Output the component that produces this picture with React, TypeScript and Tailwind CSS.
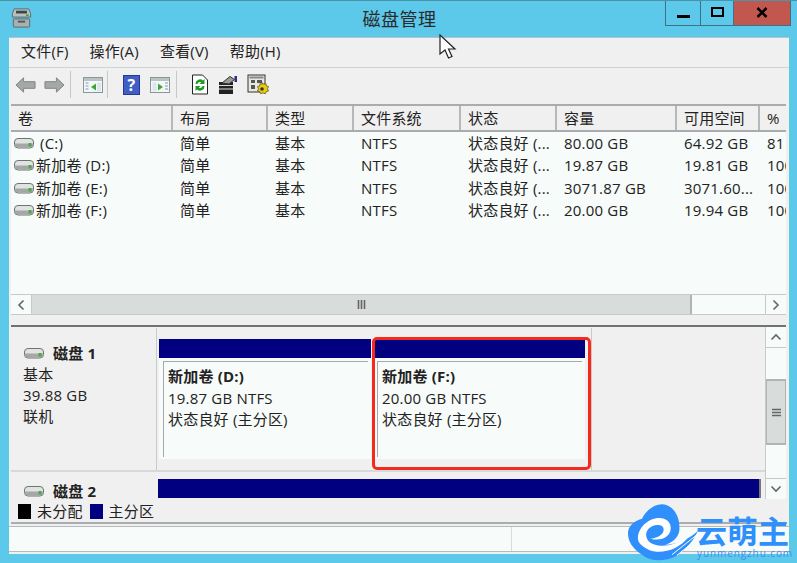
import React from "react";

const font = { fontFamily: '"Open Sans","Noto Sans CJK SC",sans-serif' };

function Hdd({ className = "" }: { className?: string }) {
  return (
    <svg width="20" height="12" viewBox="0 0 20 12" className={className}>
      <rect x="0.500" y="1.500" width="19" height="9.500" rx="3.500" fill="#dfe3e1" stroke="#6f7472" />
      <path d="M1 6.500h18v1.500a2.500 2.500 0 0 1-2.500 2.500h-13A2.500 2.500 0 0 1 1 8z" fill="#a3a8a6" />
      <rect x="14.500" y="6" width="3" height="3.500" fill="#4ea84a" />
    </svg>
  );
}

function Arrow({ dir }: { dir: "l" | "r" }) {
  return (
    <svg width="21" height="18" viewBox="0 0 22 18">
      <path
        d={dir === "l" ? "M1 9 9 1.500V5.500h12v7H9v4z" : "M21 9 13 1.500V5.500H1v7h12v4z"}
        fill="#a4a8a6"
        stroke="#7f8381"
      />
    </svg>
  );
}

function Panel({ right }: { right?: boolean }) {
  return (
    <svg width="20" height="18" viewBox="0 0 20 18">
      <rect x="0.500" y="1.500" width="19" height="15" fill="#f4f7f7" stroke="#8d9596" />
      <rect x="1" y="2" width="18" height="3" fill="#b9c3c6" />
      {right ? (
        <>
          <rect x="2.500" y="6.500" width="4" height="9" fill="#dbe7ee" />
          <path d="M8 7.500 13 11l-5 3.500z" fill="#3fa53a" />
          <path d="M15 7h3M15 10h3M15 13h3" stroke="#7c99b3" />
        </>
      ) : (
        <>
          <path d="M2.500 7h3M2.500 10h3M2.500 13h3" stroke="#7c99b3" />
          <path d="M13 7.500 8 11l5 3.500z" fill="#3fa53a" />
          <rect x="14" y="6.500" width="4" height="9" fill="#dbe7ee" />
        </>
      )}
    </svg>
  );
}

function Sep() {
  return <div className="h-[27px] w-px bg-[#c4c8c8]" />;
}

function Toolbar() {
  return (
    <div className="flex h-[37px] shrink-0 items-center border-t border-[#cfd3d3] pb-[3px] pl-[6px]">
      <div className="flex w-[55px] gap-[8px]">
        <Arrow dir="l" />
        <Arrow dir="r" />
      </div>
      <Sep />
      <div className="ml-[12px] mr-[4px]">
        <Panel />
      </div>
      <Sep />
      <div className="ml-[15px] flex h-[20px] w-[17px] items-center justify-center border border-[#26379a] bg-[#3f5fc4] text-[16px] font-bold leading-none text-white">
        ?
      </div>
      <div className="ml-[10px] mr-[6px]">
        <Panel right />
      </div>
      <Sep />
      <svg width="18" height="21" viewBox="0 0 18 21" className="ml-[14px]">
        <path d="M1.500 1h10l5 5v14h-15z" fill="#fff" stroke="#222" />
        <path d="M4.500 10a4.500 4.500 0 0 1 7.500-3.500l1.500-1.500v5h-5l1.700-1.700A2.500 2.500 0 0 0 6.500 10z" fill="#1f9a22" />
        <path d="M13.500 12a4.500 4.500 0 0 1-7.500 3.500L4.500 17v-5h5l-1.700 1.700a2.500 2.500 0 0 0 3.700-1.700z" fill="#1f9a22" />
      </svg>
      <svg width="20" height="20" viewBox="0 0 20 20" className="ml-[9px]">
        <rect x="1" y="7" width="14" height="12" fill="#222" />
        <path d="M1 10.500h14M1 14h14" stroke="#dedede" />
        <path d="M4 8 12 1.500l4.500 3L11 9z" fill="#9a9a9a" stroke="#333" />
        <rect x="16.500" y="1" width="2.500" height="6" fill="#2b2b90" />
      </svg>
      <svg width="22" height="21" viewBox="0 0 22 21" className="ml-[9px]">
        <rect x="1" y="1" width="17" height="17" fill="#e8e8e2" stroke="#333" />
        <rect x="2.500" y="2.500" width="14" height="2" fill="#8a8a86" />
        <path d="M4 6h4v3H4zM10 6h5v3h-5zM4 11h4v4H4z" fill="#555" />
        <path d="M15 8.500l1.700 1.700 2.200-.6.500 2.200 2.100.8-1 2.200 1 2.200-2.100.6-1 2.100-2.400-.8-2.400.8-1-2.100-2.100-.6 1-2.200-1-2.200 2.100-.8.500-2.200 2.200.6z" fill="#e8cb14" stroke="#4d4410" strokeWidth=".7" />
        <circle cx="15" cy="15" r="1.800" fill="#333" />
      </svg>
    </div>
  );
}

const cols = [162, 95, 86, 107, 96, 120, 83, 26];
const heads = ["卷", "布局", "类型", "文件系统", "状态", "容量", "可用空间", "%"];
const rows = [
  [" (C:)", "简单", "基本", "NTFS", "状态良好 (...", "80.00 GB", "64.92 GB", "81"],
  ["新加卷 (D:)", "简单", "基本", "NTFS", "状态良好 (...", "19.87 GB", "19.81 GB", "100"],
  ["新加卷 (E:)", "简单", "基本", "NTFS", "状态良好 (...", "3071.87 GB", "3071.60...", "100"],
  ["新加卷 (F:)", "简单", "基本", "NTFS", "状态良好 (...", "20.00 GB", "19.94 GB", "100"],
];

function VolumeList() {
  return (
    <div className="ml-[2px] mr-[3px] flex h-[211px] shrink-0 flex-col border-t-2 border-[#a9adad] bg-[#f7fbf9]">
      <div className="flex h-[26px] shrink-0 border-b-2 border-[#a9adad] bg-[#f0f0f0]">
        {heads.map((h, i) => (
          <div
            key={h}
            className="flex shrink-0 items-center overflow-hidden whitespace-nowrap border-r-2 border-[#b4b8b8] pl-[7px] pt-[1px] last:border-r-0"
            style={{ width: cols[i] }}
          >
            {h}
          </div>
        ))}
      </div>
      <div className="flex flex-1 flex-col">
        {rows.map((r) => (
          <div key={r[0]} className="flex h-[22.300px] items-center">
            {r.map((c, i) => (
              <div
                key={i}
                className={`flex shrink-0 items-center overflow-hidden whitespace-pre ${i === 0 ? "pl-[3px]" : "pl-[7px]"}`}
                style={{ width: cols[i] }}
              >
                {i === 0 && <Hdd className="mr-[2px] shrink-0" />}
                {c}
              </div>
            ))}
          </div>
        ))}
      </div>
      <div className="flex h-[21px] shrink-0 border-y border-[#c6caca] bg-[#f7fbf9]">
        <div className="flex w-[21px] items-center justify-center border-r border-[#c6caca]">
          <svg width="8" height="12" viewBox="0 0 8 12"><path d="M6.500 1.500 2 6l4.500 4.500" fill="none" stroke="#666" strokeWidth="1.600" /></svg>
        </div>
        <div className="flex w-[660px] items-center justify-center border-r-2 border-[#b0b4b4] bg-[#d8dcda]">
          <svg width="9" height="9" viewBox="0 0 9 9"><path d="M1.500 0v9M4.500 0v9M7.500 0v9" stroke="#666" strokeWidth="1.600" /></svg>
        </div>
        <div className="flex-1" />
        <div className="flex w-[21px] items-center justify-center border-l border-[#c6caca]">
          <svg width="8" height="12" viewBox="0 0 8 12"><path d="M1.500 1.500 6 6l-4.500 4.500" fill="none" stroke="#666" strokeWidth="1.600" /></svg>
        </div>
      </div>
    </div>
  );
}

function Partition({ name, size }: { name: string; size: string }) {
  return (
    <div className="flex h-[127px] w-[212px] shrink-0 flex-col">
      <div className="h-[19px] shrink-0 bg-[#000080]" />
      <div className="h-[101px] bg-[#f7fbf9] pl-[4px] pr-[3px] pt-[3px]">
        <div className="h-[96px] border-l border-t border-[#a6a9a9] pl-[4px] pt-[4px] leading-[21.500px]">
          <div className="font-bold">{name}</div>
          <div>{size}</div>
          <div>状态良好 (主分区)</div>
        </div>
      </div>
    </div>
  );
}

function DiskInfo({ title, lines }: { title: string; lines: string[] }) {
  return (
    <div className={`w-[145px] shrink-0 pl-[12px] ${lines.length ? "pt-[14px]" : "pt-[8px]"}`}>
      <div className="flex items-center font-bold">
        <Hdd className="ml-[1px] mr-[9px]" />
        {title}
      </div>
      <div className="-mt-[1px] leading-[21px]">
        {lines.map((l) => (
          <div key={l}>{l}</div>
        ))}
      </div>
    </div>
  );
}

function Disks() {
  return (
    <div className="relative ml-[2px] mr-[3px] h-[174px] shrink-0 overflow-hidden border-t-2 border-[#6f7373] bg-[#f0f0f0]">
      <div className="flex h-[145px] border-b-2 border-[#d6d9d9] pt-[1px]">
        <DiskInfo title="磁盘 1" lines={["基本", "39.88 GB", "联机"]} />
        <div className="flex gap-[2px] border-l border-r border-[#c8cbcb] pl-[2px] pr-[6px] pt-[11px]">
          <Partition name="新加卷  (D:)" size="19.87 GB NTFS" />
          <Partition name="新加卷  (F:)" size="20.00 GB NTFS" />
        </div>
      </div>
      <div className="flex">
        <DiskInfo title="磁盘 2" lines={[]} />
        <div className="ml-[2px] mt-[7px] h-[19px] w-[603px] border-r-2 border-[#777] bg-[#000080]" />
      </div>
      <div className="absolute bottom-0 right-0 top-0 flex w-[21px] flex-col border-l border-[#c6caca] bg-[#f7fbf9]">
        <div className="flex h-[21px] shrink-0 items-center justify-center border-b border-[#c6caca]">
          <svg width="12" height="8" viewBox="0 0 12 8"><path d="M1.500 6.500 6 2l4.500 4.500" fill="none" stroke="#666" strokeWidth="1.600" /></svg>
        </div>
        <div className="mt-[31px] flex h-[66px] shrink-0 items-center justify-center border-y-2 border-x border-[#b0b4b4] bg-[#d8dcda]">
          <svg width="9" height="9" viewBox="0 0 9 9"><path d="M0 1.500h9M0 4.500h9M0 7.500h9" stroke="#666" strokeWidth="1.600" /></svg>
        </div>
        <div className="flex-1" />
        <div className="flex h-[21px] shrink-0 items-center justify-center border-t border-[#c6caca]">
          <svg width="12" height="8" viewBox="0 0 12 8"><path d="M1.500 1.500 6 6l4.500-4.500" fill="none" stroke="#666" strokeWidth="1.600" /></svg>
        </div>
      </div>
    </div>
  );
}

export default function App() {
  return (
    <div className="relative flex h-[563px] w-[797px] flex-col overflow-hidden border-t border-[#4b93a8] bg-[#5cc8ea] px-[9px] text-[15px] tracking-[0.2px] text-[#222]" style={font}>
      <div className="relative h-[36px] shrink-0">
        <svg width="21" height="20" viewBox="0 0 22 22" className="absolute left-[2px] top-[7px]">
          <path d="M3 1h16l2 5v4H1V6z" fill="#b8c0bf" stroke="#5c6564" />
          <rect x="5" y="3" width="12" height="3" fill="#38464a" />
          <rect x="16" y="7" width="3" height="2" fill="#43a53e" />
          <rect x="2" y="12" width="18" height="9" rx="1" fill="#a9b1b0" stroke="#5c6564" />
          <rect x="7" y="14" width="8" height="2" fill="#4d5657" />
        </svg>
        <div className="pl-[2px] pt-[5px] text-center text-[18px] leading-[26px] tracking-[0.500px] text-[#2b2b2b]">磁盘管理</div>
        <div className="absolute right-[-3px] top-0 flex h-[25px] border-b border-l border-[#3b7286]">
          <div className="flex w-[35px] items-center justify-center border-r border-[#3b7286] pt-[6px]">
            <div className="h-[3px] w-[13px] bg-black" />
          </div>
          <div className="flex w-[32px] items-center justify-center pb-[2px]">
            <div className="h-[10px] w-[13px] border-2 border-black" />
          </div>
          <div className="flex w-[58px] items-center justify-center border-x border-[#3b7286] bg-[#c1574f] pb-[1px]">
            <svg width="12" height="11" viewBox="0 0 12 11"><path d="M1.500 1 10.500 10M10.500 1 1.500 10" stroke="#000" strokeWidth="2.500" /></svg>
          </div>
        </div>
      </div>
      <div className="flex w-[780px] flex-1 flex-col border-t border-[#b4c4c8] bg-[#f0f0f0]">
        <div className="flex h-[29px] shrink-0 items-center gap-[21px] pb-[2px] pl-[12px]">
          <span>文件(F)</span>
          <span>操作(A)</span>
          <span>查看(V)</span>
          <span>帮助(H)</span>
        </div>
        <Toolbar />
        <VolumeList />
        <div className="h-[10px] shrink-0" />
        <Disks />
        <div className="mx-[2px] flex h-[25px] shrink-0 items-center border-b-2 border-[#a9adad] pl-[7px] pt-[2px]">
          <div className="h-[15px] w-[13px] bg-black" />
          <span className="ml-[6px]">未分配</span>
          <div className="ml-[7px] h-[15px] w-[13px] bg-[#000080]" />
          <span className="ml-[6px]">主分区</span>
        </div>
        <div className="mt-[2px] flex h-[26px] shrink-0 border-y border-[#b6baba] bg-[#f7fbf9]">
          <div className="w-[503px] border-r border-[#d8dcdc]" />
        </div>
      </div>
      <div className="h-[9px] shrink-0" />

      {/* red annotation */}
      <div className="absolute left-[372px] top-[336px] h-[133px] w-[219px] rounded-[5px] border-[3px] border-[#f52a1c]" />

      {/* mouse cursor */}
      <svg width="18" height="26" viewBox="0 0 18 26" className="absolute left-[439px] top-[33px]">
        <path d="M1 1v19l5-4 3.500 8 3.500-1.500L9.500 15H16z" fill="#fff" stroke="#222" strokeWidth="1.200" />
      </svg>

      {/* watermark */}
      <svg width="90" height="65" viewBox="0 0 270 195" className="absolute left-[622px] top-[497px]">
        <path d="M60 62C75 30 110 10 135 22C160 32 172 60 172 85C175 110 160 130 130 140C160 140 200 125 228 98C215 125 200 145 180 160C150 192 90 195 60 170C30 150 18 130 18 105C18 85 35 68 60 62Z" fill="#2f8ffb" />
        <path d="M48 125C45 90 80 58 115 60C140 62 150 80 145 100C138 120 115 130 85 122C105 120 125 110 125 95C125 80 105 78 90 85C70 95 68 115 80 130C100 150 150 150 200 115C170 160 110 170 80 155C60 145 50 135 48 125Z" fill="#fff" />
        <path d="M150 170 225 110M165 172 222 125" stroke="#f7fbf9" strokeWidth="3" />
      </svg>
      <div className="absolute left-[696px] top-[515px] text-[31px] font-bold leading-[31px] tracking-[0px] text-[#2f8ffb]">云萌主</div>
      <div className="absolute left-[697px] top-[547px] text-[10px] leading-[11px] tracking-[0.900px] text-[#3f8ff0]">yunmengzhu.com</div>
    </div>
  );
}
